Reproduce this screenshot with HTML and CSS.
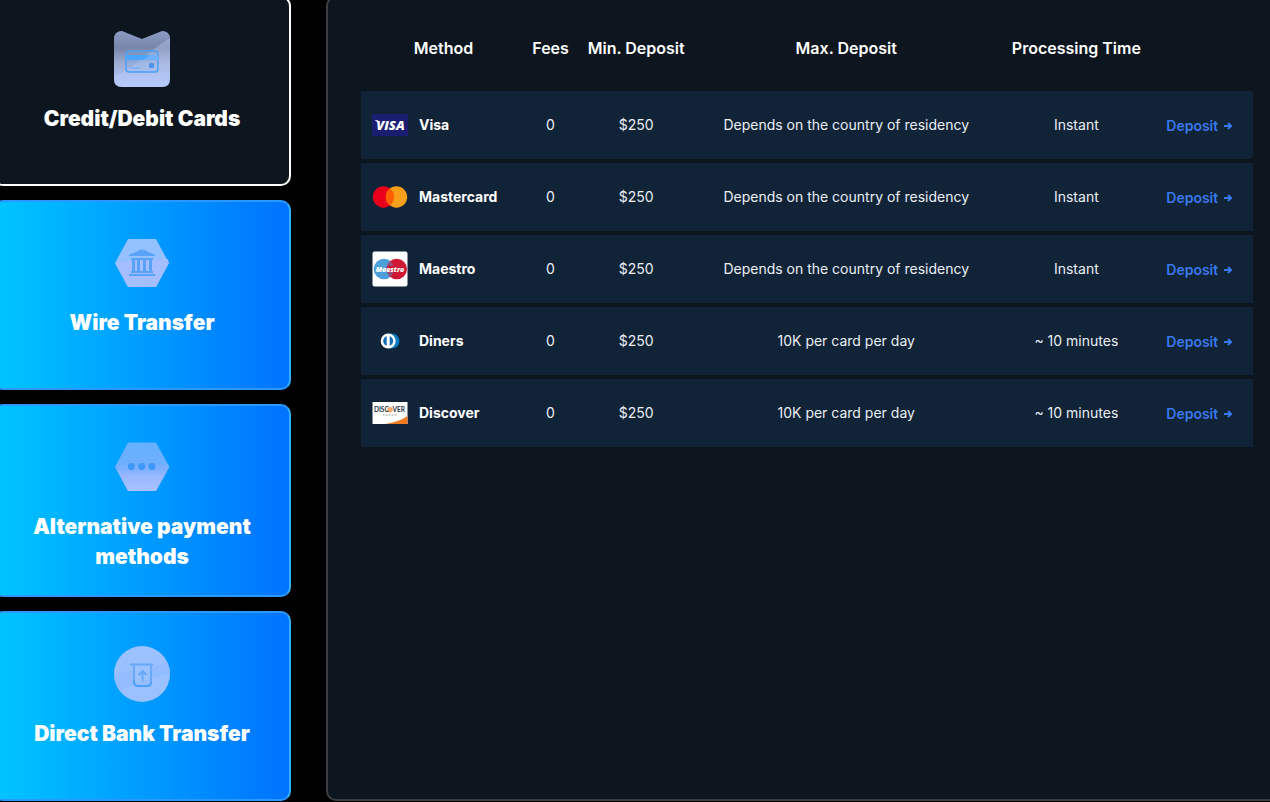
FILE: index.html
```html
<!DOCTYPE html>
<html lang="en">
<head>
<meta charset="utf-8">
<title>Deposit methods</title>
<link rel="stylesheet" href="styles.css">
</head>
<body>
<main class="layout">
  <nav class="categories" aria-label="Payment categories">
    <button class="category category-active" type="button">
      <svg class="category-icon" viewBox="0 0 56 56" aria-hidden="true">
        <defs>
          <linearGradient id="fade" x1="0" y1="0" x2="0" y2="1"><stop offset="0" stop-color="#8a9bc4"/><stop offset=".3" stop-color="#7886a8"/><stop offset=".6" stop-color="#9fafd6"/><stop offset="1" stop-color="#b0c6ff"/></linearGradient>
          <clipPath id="badge"><path d="M0 8Q0 0 8 0L28 8L48 0Q56 0 56 8V48Q56 56 48 56H8Q0 56 0 48Z"/></clipPath>
        </defs>
        <g clip-path="url(#badge)">
          <path fill="url(#fade)" d="M0 0H56V56H0Z"/>
          <path fill="#c4d3ff" fill-opacity=".35" d="M56 7C38 17 22 36 0 45V56H56Z"/>
        </g>
        <rect x="12" y="20" width="32" height="21" rx="3" fill="#5eadff" fill-opacity=".12" stroke="#4d9ff5" stroke-width="1.500"/>
        <path fill="#4ba6ff" d="M12 24H36L29 29H12Z"/>
        <path fill="#6fb0fa" d="M36 24H44V29H29Z"/>
        <path stroke="#6ba9f8" stroke-width="1" d="M16 37H26"/>
        <rect x="35" y="32" width="5" height="5" rx="1.500" fill="#4b92ea"/>
      </svg>
      <span>Credit/Debit Cards</span>
    </button>
    <button class="category" type="button">
      <svg class="category-icon" viewBox="0 0 56 56" aria-hidden="true">
        <path fill="#93c0ff" d="M14 4H42L55 28L42 52H14L1 28Z"/>
        <path fill="#a9bdff" fill-opacity=".75" d="M1 28C18 24 35 25 54 24L55 28L42 52H14Z"/>
        <g fill="#58a2fa">
          <path d="M15 20Q18 18 22 17Q28 12 34 17Q38 18 41 20V21H15Z"/>
          <path d="M17 23H39V25H17ZM18 25H21V36H18ZM23 25H26V36H23ZM29 25H32V36H29ZM35 25H38V36H35ZM17 36H39V38H17ZM15 39H41V41H15Z"/>
        </g>
      </svg>
      <span>Wire Transfer</span>
    </button>
    <button class="category" type="button">
      <svg class="category-icon" viewBox="0 0 56 56" aria-hidden="true">
        <defs><linearGradient id="haze" x1="0" y1="0" x2="0" y2="1"><stop offset="0" stop-color="#65b1ff"/><stop offset=".55" stop-color="#70aeff"/><stop offset=".7" stop-color="#99b9ff"/><stop offset="1" stop-color="#adc8ff"/></linearGradient></defs>
        <path fill="url(#haze)" d="M14 3.500H42L55.500 28L42 52H14L1 28Z"/>
        <path fill="#a0b5ff" fill-opacity=".3" d="M1 28C13 24 39 29 54 25L55 28L42 52H14Z"/>
        <g fill="#3b98f8"><circle cx="17.300" cy="27.500" r="3.500"/><circle cx="27.700" cy="27.500" r="3.500"/><circle cx="38" cy="27.500" r="3.500"/></g>
      </svg>
      <span>Alternative payment methods</span>
    </button>
    <button class="category" type="button">
      <svg class="category-icon" viewBox="0 0 56 56" aria-hidden="true">
        <circle cx="28" cy="28" r="28" fill="#9bc1ff"/>
        <path fill="#8db9ff" d="M53 15C48 19 43 18 38 21V38H20V24C12 25 6 26 0 28A28 28 0 0 0 6 45C25 35 43 30 56 28A28 28 0 0 0 53 15Z" fill-opacity=".6"/>
        <g fill="none" stroke="#65a7fb" stroke-width="1.800">
          <path d="M16 18.500H39M20 19V36M37 19V36"/>
          <path d="M20 34V36Q20 40 24 40H33Q37 40 37 36" stroke="#49a0fa" stroke-width="2"/>
          <path d="M28.500 35V27M24.500 29L28.500 25L32.500 29"/>
        </g>
      </svg>
      <span>Direct Bank Transfer</span>
    </button>
  </nav>
  <section class="panel" aria-label="Credit and debit cards">
    <table class="methods">
      <colgroup><col class="col-method"><col class="col-fees"><col class="col-min"><col class="col-max"><col class="col-time"><col></colgroup>
      <thead>
        <tr><th scope="col">Method</th><th scope="col">Fees</th><th scope="col">Min. Deposit</th><th scope="col">Max. Deposit</th><th scope="col">Processing Time</th><td></td></tr>
      </thead>
      <tbody>
        <tr>
          <td><div class="method"><svg class="logo" viewBox="0 0 36 36" aria-hidden="true"><path fill="#191e70" d="M0 7H36V29H0Z"/><text class="logo-text" x="18.500" y="22.500" text-anchor="middle" font-size="13" fill="#fff">VISA</text><path fill="#fff" d="M2.500 13.200H6L7 17Q5 14.500 2.500 13.200Z"/></svg>Visa</div></td>
          <td>0</td><td>$250</td><td>Depends on the country of residency</td><td>Instant</td>
          <td class="action"><a href="#visa">Deposit <svg class="arrow" viewBox="0 0 10 10" aria-hidden="true"><path d="M1 5H8M5 2L8 5L5 8"/></svg></a></td>
        </tr>
        <tr>
          <td><div class="method"><svg class="logo" viewBox="0 0 36 36" aria-hidden="true"><circle cx="11.500" cy="18" r="10.700" fill="#eb001b"/><circle cx="24.500" cy="18" r="10.700" fill="#f79e1b"/><path fill="#ff5f00" d="M18 9.500A10.700 10.700 0 0 1 18 26.500A10.700 10.700 0 0 1 18 9.500Z"/></svg>Mastercard</div></td>
          <td>0</td><td>$250</td><td>Depends on the country of residency</td><td>Instant</td>
          <td class="action"><a href="#mastercard">Deposit <svg class="arrow" viewBox="0 0 10 10" aria-hidden="true"><path d="M1 5H8M5 2L8 5L5 8"/></svg></a></td>
        </tr>
        <tr>
          <td><div class="method"><svg class="logo" viewBox="0 0 36 36" aria-hidden="true"><rect x=".5" y=".5" width="35" height="35" rx="2" fill="#fff"/><circle cx="12" cy="18" r="10.300" fill="#4d9fda"/><circle cx="24.700" cy="18" r="10.300" fill="#ce1834"/><path stroke="#4d9fda" stroke-width=".8" d="M16 12H20M15 14H21M15 22H21M16 24H20"/><text class="logo-text" x="18" y="20.500" text-anchor="middle" font-size="7" fill="#fff">Maestro</text></svg>Maestro</div></td>
          <td>0</td><td>$250</td><td>Depends on the country of residency</td><td>Instant</td>
          <td class="action"><a href="#maestro">Deposit <svg class="arrow" viewBox="0 0 10 10" aria-hidden="true"><path d="M1 5H8M5 2L8 5L5 8"/></svg></a></td>
        </tr>
        <tr>
          <td><div class="method"><svg class="logo" viewBox="0 0 36 36" aria-hidden="true"><path fill="#0879bd" d="M16 10.500H20A7.500 7.500 0 0 1 20 25.500H16Z"/><circle cx="16.200" cy="18" r="7.500" fill="#fff"/><circle cx="16.200" cy="18" r="5" fill="#126db5"/><path fill="#fff" d="M14.700 12.500H17.700V23.500H14.700Z"/></svg>Diners</div></td>
          <td>0</td><td>$250</td><td>10K per card per day</td><td>~ 10 minutes</td>
          <td class="action"><a href="#diners">Deposit <svg class="arrow" viewBox="0 0 10 10" aria-hidden="true"><path d="M1 5H8M5 2L8 5L5 8"/></svg></a></td>
        </tr>
        <tr>
          <td><div class="method"><svg class="logo" viewBox="0 0 36 36" aria-hidden="true"><path fill="#fff" d="M.5 7H35.500V29H.5Z"/><path fill="#f17a21" d="M35.500 21V29H13Q27 27 35.500 21Z"/><circle cx="18" cy="14.800" r="2.700" fill="#f8a86a"/><g class="logo-sans" font-size="6.500" fill="#263142"><text x="2" y="17.300">DISC</text><text x="20.500" y="17.300">VER</text></g><path stroke="#777" stroke-width=".7" stroke-dasharray="1 .5" d="M11 20H25"/></svg>Discover</div></td>
          <td>0</td><td>$250</td><td>10K per card per day</td><td>~ 10 minutes</td>
          <td class="action"><a href="#discover">Deposit <svg class="arrow" viewBox="0 0 10 10" aria-hidden="true"><path d="M1 5H8M5 2L8 5L5 8"/></svg></a></td>
        </tr>
      </tbody>
    </table>
  </section>
</main>
</body>
</html>
```
FILE: styles.css
```css
* { box-sizing: border-box; }
html { height: 100%; overflow: hidden; background: #000; }
body {
  margin: 0;
  overflow: hidden;
  background: #000;
  color: #fff;
  font-family: Inter, "Liberation Sans", sans-serif;
}
/* The layout bleeds past the window on the top and both sides. */
.layout {
  display: grid;
  grid-template-columns: 298px minmax(0, 1fr);
  gap: 35px;
  margin: -4px -18px 0 -7px;
}
.categories { display: grid; gap: 14px; }
.category {
  display: flex;
  flex-direction: column;
  align-items: center;
  gap: 17px;
  min-height: 190px;
  padding: 33px 16px 23px;
  border: 2px solid #2a98ff;
  border-right-color: #35b0ff;
  border-radius: 10px;
  background: linear-gradient(90deg, #00c6ff, #0072ff) border-box;
  color: #fff;
  font: 900 21px/30px Inter, "Liberation Sans", sans-serif;
  text-align: center;
  cursor: pointer;
}
.category-active { border-color: #fff; background: #0d151e; }
.category-icon { width: 56px; height: 56px; flex: none; }
.panel {
  padding: 24px 33px;
  border: 2px solid #3b3e43;
  border-radius: 10px;
  background: #0d151e;
}
.methods {
  width: 100%;
  table-layout: fixed;
  border-collapse: separate;
  border-spacing: 0 4px;
  font-size: 14px;
  line-height: 20px;
  text-align: center;
}
.col-method { width: 18.5%; }
.col-fees { width: 5.5%; }
.col-min { width: 13.7%; }
.col-max { width: 33.4%; }
.col-time { width: 18.2%; }
.methods th {
  height: 44px;
  padding: 0;
  font-size: 16px;
  font-weight: 600;
  white-space: nowrap;
}
.methods thead::after { content: ""; display: block; height: 13px; }
.methods td { padding: 0; color: #e9eef4; }
.methods tbody td { height: 68px; background: #112337; }
.methods tbody tr:first-child td:last-child { border-radius: 0 3px 3px 0; }
.method {
  display: flex;
  align-items: center;
  gap: 11px;
  padding-left: 11px;
  color: #fff;
  font-weight: 700;
}
.logo { width: 36px; height: 36px; flex: none; }
.logo-text { font-family: "Open Sans", sans-serif; font-weight: 800; font-style: italic; }
.logo-sans { font-family: Lato, sans-serif; font-weight: 700; }
.methods .action { padding: 2px 11px 0 0; }
.action a {
  display: inline-flex;
  align-items: center;
  gap: 5px;
  color: #3878ec;
  font-weight: 600;
  text-decoration: none;
}
.arrow { width: 10px; height: 10px; fill: none; stroke: currentColor; stroke-width: 2; }
```
